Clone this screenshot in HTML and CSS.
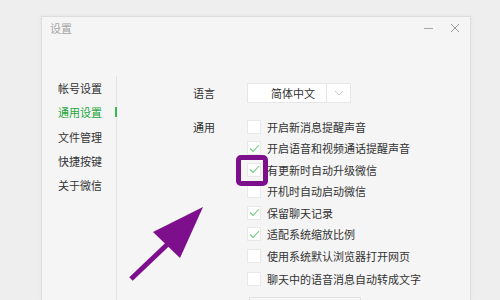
FILE: index.html
```html
<!DOCTYPE html>
<html lang="zh">
<head>
<meta charset="utf-8">
<link rel="stylesheet" href="styles.css">
</head>
<body>
<div class="window">
  <div class="titlebar">
    <span class="title">设置</span>
    <div class="controls">
      <svg class="ctl" width="12" height="12" viewBox="0 0 12 12"><line x1="1" y1="6.5" x2="10" y2="6.5" stroke="#a8a8a8" stroke-width="1"/></svg>
      <svg class="ctl" width="12" height="12" viewBox="0 0 12 12"><path d="M2 2 L10 10 M10 2 L2 10" stroke="#999999" stroke-width="1" fill="none"/></svg>
    </div>
  </div>
  <div class="main">
    <ul class="sidebar">
      <li>帐号设置</li>
      <li class="active">通用设置</li>
      <li>文件管理</li>
      <li>快捷按键</li>
      <li>关于微信</li>
    </ul>
    <div class="content">
      <div class="label lang-label">语言</div>
      <div class="select">
        <span class="select-text">简体中文</span>
        <span class="select-arrow"><svg width="10" height="6" viewBox="0 0 10 6"><path d="M1 1 L5 5 L9 1" stroke="#cccccc" stroke-width="1" fill="none"/></svg></span>
      </div>
      <div class="label gen-label">通用</div>
      <div class="options">
        <div class="opt"><span class="cb"></span>开启新消息提醒声音</div>
        <div class="opt"><span class="cb on"><svg width="11" height="9" viewBox="0 0 11 9"><path d="M1 4.5 L4 7.5 L10 1" stroke="#6cc67a" stroke-width="1.1" fill="none"/></svg></span>开启语音和视频通话提醒声音</div>
        <div class="opt"><span class="cb on"><svg width="11" height="9" viewBox="0 0 11 9"><path d="M1 4.5 L4 7.5 L10 1" stroke="#6cc67a" stroke-width="1.1" fill="none"/></svg></span>有更新时自动升级微信</div>
        <div class="opt"><span class="cb"></span>开机时自动启动微信</div>
        <div class="opt"><span class="cb on"><svg width="11" height="9" viewBox="0 0 11 9"><path d="M1 4.5 L4 7.5 L10 1" stroke="#6cc67a" stroke-width="1.1" fill="none"/></svg></span>保留聊天记录</div>
        <div class="opt"><span class="cb on"><svg width="11" height="9" viewBox="0 0 11 9"><path d="M1 4.5 L4 7.5 L10 1" stroke="#6cc67a" stroke-width="1.1" fill="none"/></svg></span>适配系统缩放比例</div>
        <div class="opt"><span class="cb"></span>使用系统默认浏览器打开网页</div>
        <div class="opt last"><span class="cb"></span>聊天中的语音消息自动转成文字</div>
        <div class="btn"></div>
      </div>
    </div>
  </div>
</div>
<div class="highlight"></div>
<svg class="arrow" width="500" height="300" viewBox="0 0 500 300">
  <line x1="131" y1="279" x2="172" y2="240" stroke="#7e0f8c" stroke-width="5"/>
  <polygon points="203,207 153,232 180,258" fill="#7e0f8c"/>
</svg>
</body>
</html>
```

FILE: styles.css
```css
html, body {
  margin: 0;
  padding: 0;
}
body {
  width: 500px;
  height: 300px;
  overflow: hidden;
  background: #eeeeee;
  font-family: "Noto Sans CJK SC", "Noto Sans", sans-serif;
  color: #333;
  position: relative;
}
.window {
  margin: 16px 0 0 41px;
  width: 430px;
  height: 284px;
  overflow: hidden;
  background: #f5f5f5;
  border: 1px solid #dddddd;
  border-bottom: none;
  box-sizing: border-box;
  box-shadow: 0 0 3px rgba(0,0,0,0.06);
}
.titlebar {
  height: 22px;
  display: flex;
  align-items: center;
  justify-content: space-between;
  padding: 0 9px 0 8px;
}
.title {
  font-size: 11px;
  color: #a5a5a5;
}
.controls {
  display: flex;
  gap: 14px;
  align-items: center;
}
.ctl {
  display: block;
}
.main {
  display: flex;
  padding-top: 37px;
}
.sidebar {
  list-style: none;
  margin: 0;
  padding: 0 0 0 16px;
  width: 58px;
  height: 230px;
  border-right: 1px solid #e4e4e4;
}
.sidebar li {
  height: 24.3px;
  line-height: 24px;
  font-size: 11px;
  position: relative;
}
.sidebar li.active {
  color: #22a83a;
}
.sidebar li.active::after {
  content: "";
  position: absolute;
  right: -1px;
  top: 7px;
  width: 2px;
  height: 10px;
  background: #3cb850;
}
.content {
  padding: 7px 0 0 76px;
  display: grid;
  grid-template-columns: 54px auto;
  grid-template-rows: 20px auto;
  row-gap: 13px;
  align-items: start;
}
.label {
  font-size: 11px;
  line-height: 20px;
}
.gen-label {
  line-height: 22px;
}
.select {
  width: 102px;
  height: 18px;
  background: #ffffff;
  border: 1px solid #e6e6e6;
  display: flex;
}
.select-text {
  width: 79px;
  border-right: 1px solid #e6e6e6;
  font-size: 11px;
  line-height: 18px;
  text-align: center;
  box-sizing: border-box;
  padding-left: 12px;
}
.select-arrow {
  flex: 1;
  display: flex;
  align-items: center;
  justify-content: center;
}
.options {
  display: flex;
  flex-direction: column;
}
.opt {
  height: 21.5px;
  display: flex;
  align-items: center;
  font-size: 11px;
}
.opt.last {
  margin-top: 1.5px;
}
.cb {
  width: 12px;
  height: 12px;
  background: #ffffff;
  border: 1px solid #e8e8e8;
  margin-right: 6px;
  display: flex;
  align-items: center;
  justify-content: center;
  flex: none;
}
.btn {
  margin-top: 7px;
  margin-left: 2px;
  width: 110px;
  height: 20px;
  border: 1px solid #e0e0e0;
  background: #f8f8f8;
}
.highlight {
  position: absolute;
  left: 236px;
  top: 155px;
  width: 32px;
  height: 31px;
  box-sizing: border-box;
  border: 5px solid #7e0f8c;
  border-radius: 5px;
}
.arrow {
  position: absolute;
  left: 0;
  top: 0;
  pointer-events: none;
}
```
